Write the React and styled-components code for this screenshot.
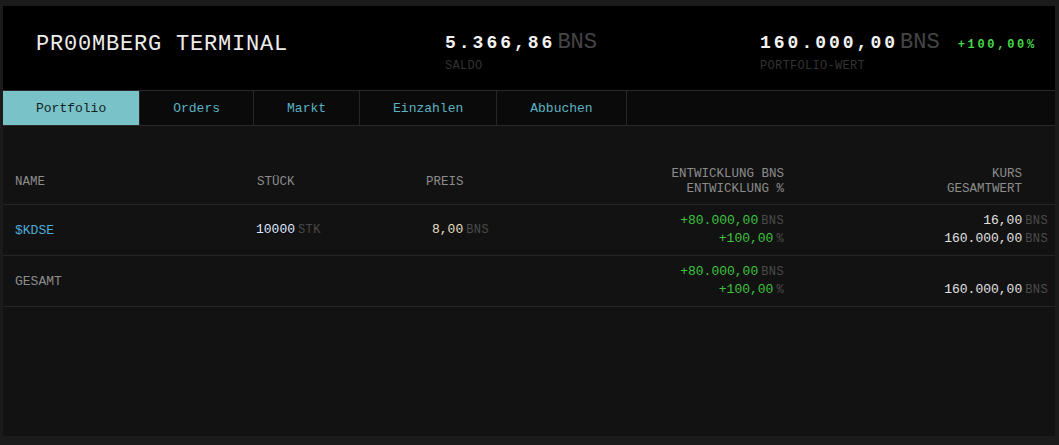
import React from "react";
import styled, { createGlobalStyle } from "styled-components";

const SERIF_MONO = `"Courier New", "Nimbus Mono PS", "Nimbus Mono L", FreeMono, Courier, "Liberation Mono", monospace`;
const NUM_FONT = `"Liberation Mono", "DejaVu Sans Mono", monospace`;

const Global = createGlobalStyle`
  html, body { margin: 0; padding: 0; background: #1b1b1b; }
  body { font-family: ${SERIF_MONO}; }
  * { box-sizing: border-box; }
`;

const Frame = styled.div`
  margin: 6px 4px 0 3px;
  width: 1052px;
  height: 430px;
  background: #121212;
  display: flex;
  flex-direction: column;
`;

const Header = styled.header`
  height: 84px;
  background: #000;
  display: grid;
  grid-template-columns: 409px 315px 1fr;
  padding: 24px 0 0 33px;
`;

const Title = styled.h1`
  margin: 2px 0 0;
  font-family: ${SERIF_MONO};
  font-weight: normal;
  font-size: 22px;
  line-height: 26px;
  letter-spacing: 0.8px;
  color: #ececec;
`;

const Stat = styled.div`
  display: flex;
  flex-direction: column;
`;

const StatLine = styled.div`
  display: flex;
  align-items: baseline;
  height: 26px;
  line-height: 26px;
`;

const BigNumber = styled.span`
  font-family: ${NUM_FONT};
  font-weight: bold;
  font-size: 18px;
  letter-spacing: 3px;
  color: #f2f2f2;
  margin-right: 2px;
`;

const BigUnit = styled.span`
  font-family: ${SERIF_MONO};
  font-size: 22px;
  color: #454545;
`;

const Change = styled.span`
  font-family: ${NUM_FONT};
  font-weight: bold;
  font-size: 12px;
  letter-spacing: 2.7px;
  color: #45d845;
  margin-left: 18px;
`;

const StatLabel = styled.div`
  margin-top: 3px;
  font-size: 12px;
  line-height: 14px;
  letter-spacing: 0.3px;
  color: #333;
`;

const Tabs = styled.nav`
  display: flex;
  height: 36px;
  background: #0a0a0a;
  border-top: 1px solid #2a2a2a;
  border-bottom: 1px solid #2a2a2a;
`;

const Tab = styled.div`
  padding: 0 33px;
  display: flex;
  align-items: center;
  font-size: 13px;
  border-right: 1px solid #262626;
  background: ${(p) => (p.$active ? "#78c2c8" : "transparent")};
  color: ${(p) => (p.$active ? "#152224" : "#5ab2c2")};
`;

const Content = styled.main`
  padding-top: 28px;
`;

const Row = styled.div`
  display: grid;
  grid-template-columns: 242px 169px 146px 236px 259px;
  min-height: 51px;
  padding-top: ${(p) => (p.$head ? 6 : 0)}px;
  align-items: center;
  border-bottom: 1px solid #262626;
`;

const HeadCell = styled.div`
  font-size: 12.5px;
  line-height: 15px;
  color: #8c8c8c;
  padding-left: ${(p) => (p.$right ? 0 : 12)}px;
  padding-right: ${(p) => p.$pr || 0}px;
  text-align: ${(p) => (p.$right ? "right" : "left")};
`;

const Cell = styled.div`
  display: flex;
  flex-direction: column;
  align-items: ${(p) => (p.$right ? "flex-end" : "flex-start")};
  padding-left: ${(p) => p.$pl || 0}px;
  padding-right: ${(p) => p.$pr || 0}px;
`;

const NameText = styled.span`
  font-size: 13px;
  color: ${(p) => p.$color || "#8c8c8c"};
`;

const ValueLine = styled.div`
  display: flex;
  align-items: baseline;
  height: 18px;
  line-height: 18px;
`;

const Num = styled.span`
  font-family: ${NUM_FONT};
  font-size: 13px;
  color: ${(p) => p.$color || "#e2e2e2"};
  margin-right: 3px;
`;

const Unit = styled.span`
  font-family: ${SERIF_MONO};
  font-size: 12px;
  letter-spacing: 0.4px;
  color: #4a4a4a;
`;

const Value = ({ n, u, color }) => (
  <ValueLine>
    <Num $color={color}>{n}</Num>
    <Unit>{u}</Unit>
  </ValueLine>
);

const GREEN = "#3fc23f";

export default function App() {
  const tabs = ["Portfolio", "Orders", "Markt", "Einzahlen", "Abbuchen"];
  return (
    <>
      <Global />
      <Frame>
        <Header>
          <Title>PR00MBERG TERMINAL</Title>
          <Stat>
            <StatLine>
              <BigNumber>5.366,86</BigNumber>
              <BigUnit>BNS</BigUnit>
            </StatLine>
            <StatLabel>SALDO</StatLabel>
          </Stat>
          <Stat>
            <StatLine>
              <BigNumber>160.000,00</BigNumber>
              <BigUnit>BNS</BigUnit>
              <Change>+100,00%</Change>
            </StatLine>
            <StatLabel>PORTFOLIO-WERT</StatLabel>
          </Stat>
        </Header>
        <Tabs>
          {tabs.map((t, i) => (
            <Tab key={t} $active={i === 0}>
              {t}
            </Tab>
          ))}
        </Tabs>
        <Content>
          <Row $head>
            <HeadCell>NAME</HeadCell>
            <HeadCell>STÜCK</HeadCell>
            <HeadCell>PREIS</HeadCell>
            <HeadCell $right $pr={12}>
              ENTWICKLUNG BNS
              <br />
              ENTWICKLUNG %
            </HeadCell>
            <HeadCell $right $pr={33}>
              KURS
              <br />
              GESAMTWERT
            </HeadCell>
          </Row>
          <Row>
            <Cell $pl={12}>
              <NameText $color="#4eaad6">$KDSE</NameText>
            </Cell>
            <Cell $pl={11}>
              <Value n="10000" u="STK" color="#dfe8ff" />
            </Cell>
            <Cell $pl={18}>
              <Value n="8,00" u="BNS" color="#eadfc2" />
            </Cell>
            <Cell $right $pr={12}>
              <Value n="+80.000,00" u="BNS" color={GREEN} />
              <Value n="+100,00" u="%" color={GREEN} />
            </Cell>
            <Cell $right $pr={7}>
              <Value n="16,00" u="BNS" />
              <Value n="160.000,00" u="BNS" />
            </Cell>
          </Row>
          <Row>
            <Cell $pl={12}>
              <NameText>GESAMT</NameText>
            </Cell>
            <Cell />
            <Cell />
            <Cell $right $pr={12}>
              <Value n="+80.000,00" u="BNS" color={GREEN} />
              <Value n="+100,00" u="%" color={GREEN} />
            </Cell>
            <Cell $right $pr={7}>
              <ValueLine />
              <Value n="160.000,00" u="BNS" />
            </Cell>
          </Row>
        </Content>
      </Frame>
    </>
  );
}
